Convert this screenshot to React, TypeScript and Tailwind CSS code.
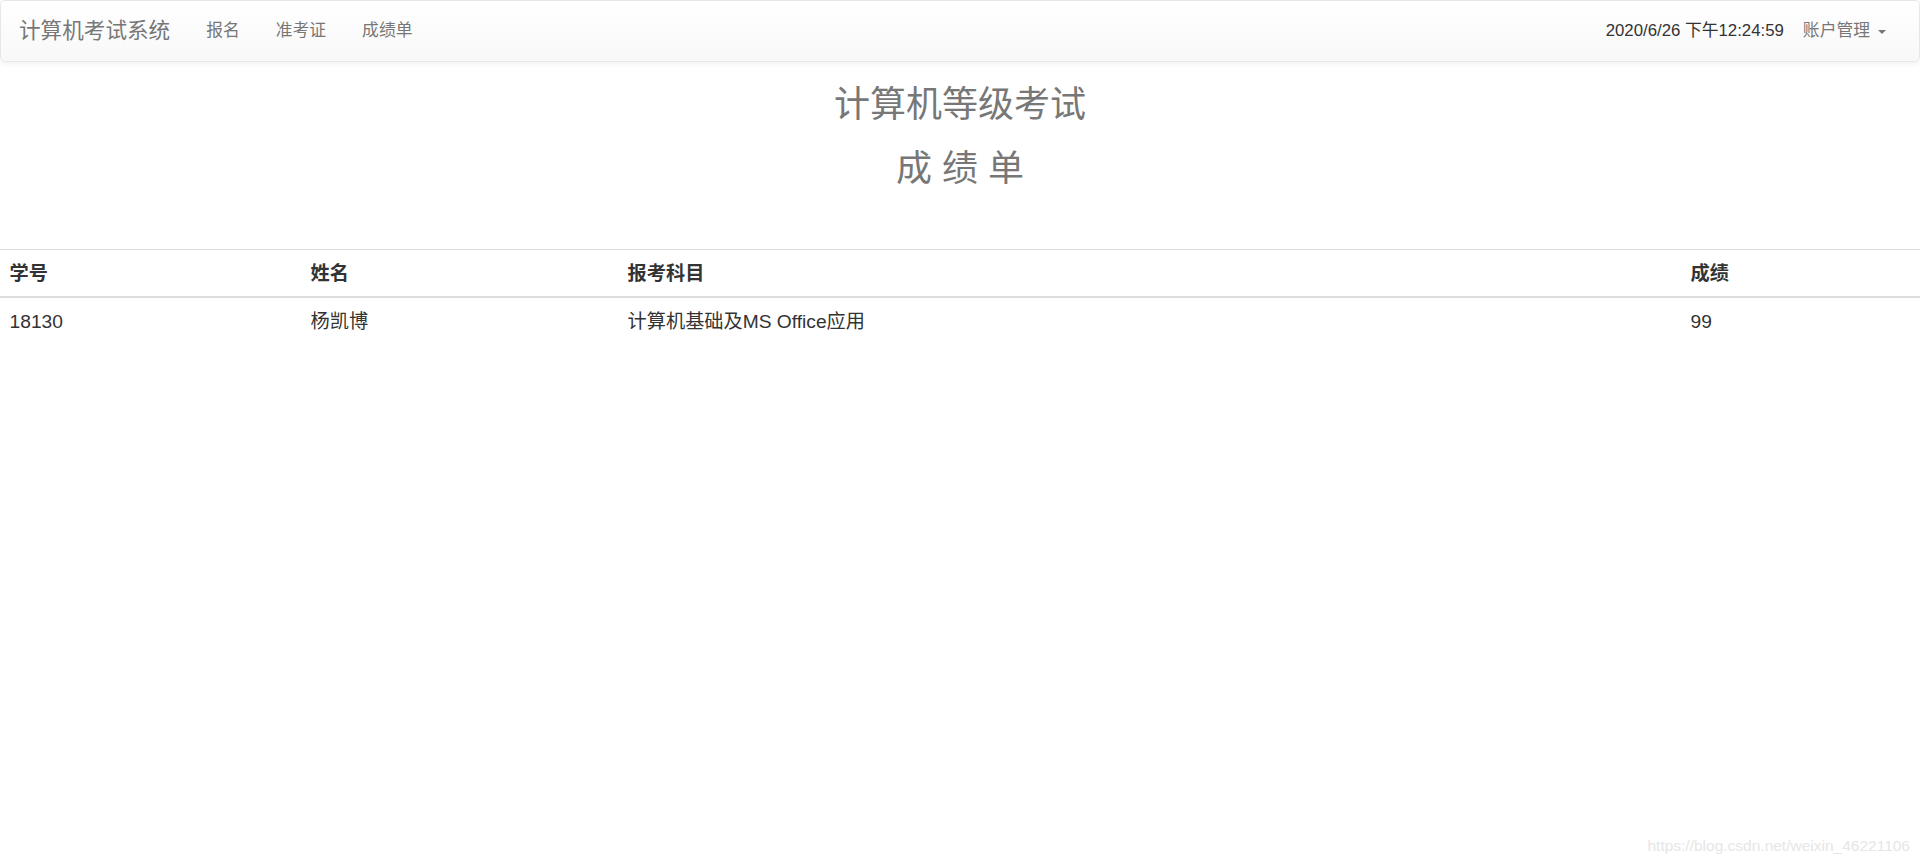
import React from "react";

const font = { fontFamily: '"Liberation Sans", Arial, "Noto Sans CJK SC", sans-serif' };

const rows = [{ id: "18130", name: "杨凯博", subject: "计算机基础及MS Office应用", score: "99" }];

const Navbar: React.FC = () => {
  return (
    <nav className="h-[62px] flex items-center justify-between border border-[#e7e7e7] rounded-[5px] bg-gradient-to-b from-white to-[#f8f8f8] shadow-[0_1px_6px_rgba(0,0,0,0.075)]">
      <div className="flex items-center h-full">
        <a className="px-[18px] text-[21.6px] leading-[24px] text-[#777]">计算机考试系统</a>
        <ul className="flex items-center">
          <li className="px-[18px] text-[16.8px] text-[#777]">报名</li>
          <li className="px-[18px] text-[16.8px] text-[#777]">准考证</li>
          <li className="px-[18px] text-[16.8px] text-[#777]">成绩单</li>
        </ul>
      </div>
      <div className="flex items-center h-full pr-[15px]">
        <span className="text-[16.8px] text-[#333]">2020/6/26 下午12:24:59</span>
        <a className="flex items-center pl-[19px] pr-[18px] text-[16.8px] text-[#777]">
          账户管理
          <span className="ml-[8px] mt-[2px] w-0 h-0 border-l-[4.8px] border-r-[4.8px] border-t-[4.8px] border-l-transparent border-r-transparent border-t-[#777]"></span>
        </a>
      </div>
    </nav>
  );
};

const App: React.FC = () => {
  return (
    <div className="relative min-h-[867px] bg-white" style={font}>
      <Navbar />
      <div className="text-center text-[#777] text-[36px] leading-[40px]">
        <h2 className="mt-[23px]">计算机等级考试</h2>
        <h2 className="mt-[24px]">成 绩 单</h2>
      </div>
      <table className="mt-[60px] w-full border-t border-[#ddd] text-[19.2px] text-[#333]">
        <thead>
          <tr className="border-b-2 border-[#ddd]">
            <th className="w-[301px] px-[9.6px] py-[9.6px] leading-[27px] text-left font-bold">学号</th>
            <th className="w-[317px] px-[9.6px] py-[9.6px] leading-[27px] text-left font-bold">姓名</th>
            <th className="w-[1063px] px-[9.6px] py-[9.6px] leading-[27px] text-left font-bold">报考科目</th>
            <th className="px-[9.6px] py-[9.6px] leading-[27px] text-left font-bold">成绩</th>
          </tr>
        </thead>
        <tbody>
          {rows.map((r) => (
            <tr key={r.id}>
              <td className="px-[9.6px] py-[9.6px] leading-[27px]">{r.id}</td>
              <td className="px-[9.6px] py-[9.6px] leading-[27px]">{r.name}</td>
              <td className="px-[9.6px] py-[9.6px] leading-[27px]">{r.subject}</td>
              <td className="px-[9.6px] py-[9.6px] leading-[27px]">{r.score}</td>
            </tr>
          ))}
        </tbody>
      </table>
      <div className="absolute right-[10px] bottom-[10px] text-[15.5px] text-[#e6e6e6]">
        https://blog.csdn.net/weixin_46221106
      </div>
    </div>
  );
};

export default App;
